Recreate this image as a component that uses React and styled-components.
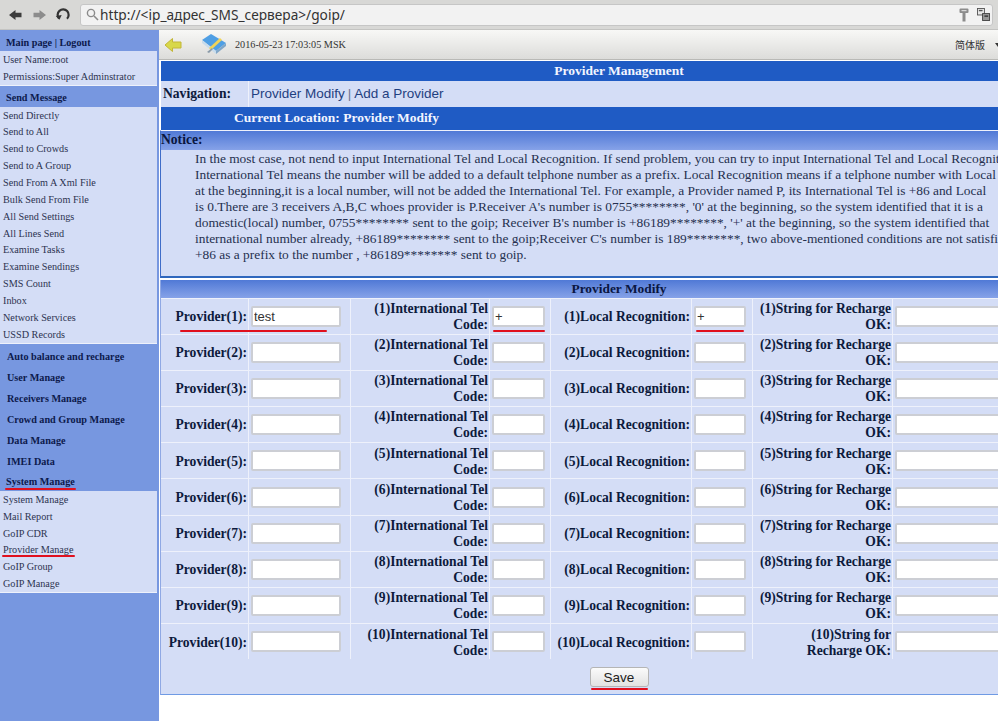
import React from 'react';
import styled, { createGlobalStyle } from 'styled-components';

const sideTop = [
  { title: 'Main page | Logout', items: ['User Name:root', 'Permissions:Super Adminstrator'] },
  {
    title: 'Send Message',
    items: [
      'Send Directly', 'Send to All', 'Send to Crowds', 'Send to A Group', 'Send From A Xml File',
      'Bulk Send From File', 'All Send Settings', 'All Lines Send', 'Examine Tasks', 'Examine Sendings',
      'SMS Count', 'Inbox', 'Network Services', 'USSD Records',
    ],
  },
];
const sideHeads = ['Auto balance and recharge', 'User Manage', 'Receivers Manage', 'Crowd and Group Manage', 'Data Manage', 'IMEI Data'];
const systemItems = ['System Manage', 'Mail Report', 'GoIP CDR', 'Provider Manage', 'GoIP Group', 'GoIP Manage'];

const noticeLines = [
  'In the most case, not nend to input International Tel and Local Recognition. If send problem, you can try to input International Tel and Local Recognition.',
  "International Tel means the number will be added to a default telphone number as a prefix. Local Recognition means if a telphone number with Local",
  'at the beginning,it is a local number, will not be added the International Tel. For example, a Provider named P, its International Tel is +86 and Local',
  "is 0.There are 3 receivers A,B,C whoes provider is P.Receiver A's number is 0755********, '0' at the beginning, so the system identified that it is a",
  "domestic(local) number, 0755******** sent to the goip; Receiver B's number is +86189********, '+' at the beginning, so the system identified that",
  "international number already, +86189******** sent to the goip;Receiver C's number is 189********, two above-mentioned conditions are not satisfied,",
  '+86 as a prefix to the number , +86189******** sent to goip.',
];

const rows = [1, 2, 3, 4, 5, 6, 7, 8, 9, 10];

const GlobalStyle = createGlobalStyle`
  html, body {
    margin: 0;
    padding: 0;
    background: #fff;
  }
  * {
    box-sizing: border-box;
  }
`;

const Page = styled.div`
  width: 998px;
  height: 721px;
  overflow: hidden;
  display: flex;
  flex-direction: column;
  font-family: 'Liberation Serif', serif;
`;

const BrowserBar = styled.div`
  flex: none;
  height: 30px;
  display: flex;
  align-items: center;
  gap: 7px;
  padding: 0 5px 0 8px;
  background: #d8d8d6;
  border-bottom: 1px solid #c4c4c2;
`;

const NavIcon = styled.svg`
  flex: none;
  width: 16px;
  height: 16px;
`;

const UrlBox = styled.div`
  flex: 1;
  height: 22px;
  margin-left: 2px;
  display: flex;
  align-items: center;
  gap: 1px;
  padding: 0 2px 0 5px;
  background: #f2f2f2;
  border: 1px solid #c6c6c6;
  border-radius: 3px;
`;

const UrlText = styled.span`
  flex: 1;
  font-family: 'Noto Sans', sans-serif;
  font-size: 13.7px;
  color: #333;
  white-space: nowrap;
`;

const Body = styled.div`
  flex: 1;
  display: flex;
  min-height: 0;
`;

const Sidebar = styled.div`
  flex: none;
  width: 159px;
  padding-top: 3px;
  background: #7797e0;
`;

const SideHead = styled.div`
  position: relative;
  height: ${p => p.$height || 21}px;
  padding-left: ${p => p.$indent || 6}px;
  display: flex;
  align-items: center;
  font-size: 10.2px;
  font-weight: bold;
  color: #0d1a4c;
  white-space: nowrap;
`;

const SidePanel = styled.div`
  width: 157px;
  margin-bottom: ${p => p.$gap || 0}px;
  padding: 0 0 0 3px;
  background: #d4ddf6;
  border-bottom: 1px solid #eef1fb;
`;

const SideItem = styled.div`
  position: relative;
  height: 16.85px;
  display: flex;
  align-items: center;
  font-size: 10.2px;
  color: #2c3350;
  white-space: nowrap;
`;

const RedMark = styled.i`
  position: absolute;
  z-index: 2;
  left: ${p => p.$left}px;
  bottom: ${p => p.$bottom}px;
  width: ${p => p.$width}px;
  height: 2px;
  background: #e0101e;
  border-radius: 1px;
`;

const Main = styled.div`
  flex: none;
  width: 839px;
  overflow: hidden;
`;

const Toolbar = styled.div`
  height: 30px;
  display: flex;
  align-items: center;
  padding-left: 5px;
  background: linear-gradient(#f8f8f6, #dcdcda);
  border-bottom: 1px solid #b9b9b6;
`;

const Stamp = styled.span`
  margin-left: 8px;
  font-size: 10.2px;
  color: #333;
  white-space: nowrap;
`;

const Lang = styled.span`
  margin-left: auto;
  margin-right: 10px;
  font-family: 'Noto Sans CJK SC', sans-serif;
  font-size: 10px;
  color: #333;
`;

const Caret = styled.span`
  flex: none;
  width: 6px;
  height: 0;
  margin-right: -3px;
  border-left: 3px solid transparent;
  border-right: 3px solid transparent;
  border-top: 4px solid #333;
`;

const Content = styled.div`
  width: 918px;
  padding-top: 1px;
  background: #fff;
`;

const BlueBar = styled.div`
  height: ${p => p.$height}px;
  margin-left: 2px;
  padding-left: ${p => p.$indent || 0}px;
  display: flex;
  align-items: center;
  justify-content: ${p => (p.$left ? 'flex-start' : 'center')};
  background: #1f5bc4;
  color: #f2f5ff;
  font-size: 13.5px;
  font-weight: bold;
  white-space: nowrap;
`;

const NavRow = styled.div`
  height: 26px;
  margin-left: 2px;
  display: grid;
  grid-template-columns: 87px 1fr;
  gap: 1px;
  background: #eef1fb;
`;

const NavLabel = styled.div`
  display: flex;
  align-items: center;
  padding-left: 2px;
  background: #d4ddf6;
  font-size: 13.6px;
  font-weight: bold;
  color: #0d1a3c;
`;

const NavValue = styled.div`
  display: flex;
  align-items: center;
  padding-left: 2px;
  background: #d4ddf6;
  font-family: 'Liberation Sans', sans-serif;
  font-size: 13.5px;
  color: #1f3f80;
`;

const NavSep = styled.span`
  margin: 0 3px;
  color: #6c7690;
`;

const GradientHead = styled.div`
  height: ${p => p.$height}px;
  padding-left: ${p => p.$indent || 0}px;
  display: flex;
  align-items: center;
  justify-content: ${p => (p.$center ? 'center' : 'flex-start')};
  background: linear-gradient(#5079d6, #86a2e8);
  font-size: ${p => p.$size}px;
  font-weight: bold;
  color: #0a1640;
`;

const NoticeBox = styled.div`
  margin-left: 1px;
  border-left: 1px solid #3f6cc8;
  border-top: 1px solid #eef1fb;
  border-bottom: 2px solid #2f67bd;
`;

const NoticeBody = styled.div`
  height: 126px;
  padding: 1px 0 0 34px;
  background: #d4ddf6;
  font-size: 13.4px;
  line-height: 16px;
  color: #25304f;
`;

const NoticeLine = styled.div`
  white-space: nowrap;
`;

const FormBox = styled.div`
  margin: 2px 0 0 1px;
  border-left: 1px solid #8fa8e4;
  border-bottom: 1px solid #6f9ae4;
`;

const FormGrid = styled.div`
  display: grid;
  grid-template-columns: 87px 101px 138px 60px 140px 60px 139px 1fr;
  grid-auto-rows: 35.2px;
  gap: 1px;
  padding-top: 1px;
  background: #eef1fb;
`;

const LabelCell = styled.div`
  position: relative;
  display: flex;
  align-items: center;
  justify-content: flex-end;
  padding: 1.5px 1px 0 4px;
  background: #d4ddf6;
  font-size: 13.6px;
  line-height: 16px;
  font-weight: bold;
  color: #0d1a3c;
  text-align: right;
`;

const InputCell = styled.div`
  position: relative;
  display: flex;
  align-items: center;
  padding-left: 2px;
  background: #d4ddf6;
`;

const TextBox = styled.input`
  width: ${p => p.$width}px;
  height: 21px;
  padding: 0 1px;
  background: #fff;
  border: 2px solid #ccced4;
  border-radius: 2px;
  font-family: 'Liberation Sans', sans-serif;
  font-size: 13px;
  color: #333;
  outline: none;
`;

const SaveRow = styled.div`
  position: relative;
  height: 35px;
  padding-top: 1px;
  display: flex;
  align-items: center;
  justify-content: center;
  background: #d4ddf6;
`;

const SaveButton = styled.button`
  width: 59px;
  height: 20px;
  padding: 0;
  background: linear-gradient(#fbfbfb, #e2e2e2);
  border: 1px solid #b5b5b5;
  border-radius: 3px;
  font-family: 'Liberation Sans', sans-serif;
  font-size: 13.5px;
  color: #222;
`;

const BackArrow = ({ flip, color }) => (
  <NavIcon viewBox="0 0 16 16" style={flip ? { transform: 'scaleX(-1)' } : undefined}>
    <path d="M1 8 L7.5 3 V5.8 H13.5 V10.2 H7.5 V13 Z" fill={color} />
  </NavIcon>
);

const Reload = () => (
  <NavIcon viewBox="0 0 16 16" style={{ marginLeft: 1 }}>
    <path d="M4 11.5 A5.5 5.5 0 1 1 12 11.8" fill="none" stroke="#333" strokeWidth="2.2" />
    <path d="M1 8.5 L7 8.5 L4 12.8 Z" fill="#333" transform="rotate(-10 4 10)" />
  </NavIcon>
);

const Search = () => (
  <svg width="13" height="13" viewBox="0 0 13 13">
    <circle cx="5" cy="5" r="3.6" fill="none" stroke="#8a8a8a" strokeWidth="1.4" />
    <path d="M8 8 L12 12" stroke="#8a8a8a" strokeWidth="1.6" />
  </svg>
);

const KeyIcon = () => (
  <svg width="10" height="14" viewBox="0 0 10 14" style={{ marginRight: 7 }}>
    <path d="M1.5 0.5 H8.5 Q9.5 0.5 9.5 1.5 V4 Q9.5 5 8.5 5 H6.5 V13.5 H3.5 V5 H1.5 Q0.5 5 0.5 4 V1.5 Q0.5 0.5 1.5 0.5 Z" fill="#8c8c8c" />
    <rect x="2.5" y="2" width="5" height="1.2" fill="#d8d8d8" />
  </svg>
);

const WindowsIcon = () => (
  <svg width="13" height="13" viewBox="0 0 14 14">
    <rect x="0.5" y="0.5" width="7.5" height="7" fill="#e8e8e8" stroke="#555" />
    <rect x="6" y="6" width="7.5" height="7.5" fill="#999" stroke="#444" />
    <rect x="2" y="2" width="4" height="1.5" fill="#555" />
    <rect x="8" y="8" width="4" height="1.5" fill="#333" />
  </svg>
);

const YellowArrow = () => (
  <svg width="18" height="16" viewBox="0 0 18 16">
    <path d="M1 8 L8.5 1.5 V5 H17 V11 H8.5 V14.5 Z" fill="#d8d84a" stroke="#c2b638" strokeWidth="1" />
  </svg>
);

const NoteIcon = () => (
  <svg width="26" height="24" viewBox="0 0 26 24" style={{ marginLeft: 19 }}>
    <path d="M1 7 L10 1 L25 10 L15 18 Z" fill="#4f9fe4" />
    <path d="M1 7 L15 18 L15 21 L1 10 Z" fill="#c8dcec" />
    <path d="M15 18 L25 10 V13 L15 21 Z" fill="#7fa6c8" />
    <path d="M8 15 L19 5 L21 7 L10 17 Z" fill="#f0d458" />
    <path d="M6 19 L11 15 L12 16 L8 20 Z" fill="#8a9aa8" />
  </svg>
);

export default function App() {
  return (
    <Page>
      <GlobalStyle />
      <BrowserBar>
        <BackArrow color="#3c3c3c" />
        <BackArrow flip color="#8c8c8c" />
        <Reload />
        <UrlBox>
          <Search />
          <UrlText>http://&lt;ip_адрес_SMS_сервера&gt;/goip/</UrlText>
          <KeyIcon />
          <WindowsIcon />
        </UrlBox>
      </BrowserBar>
      <Body>
        <Sidebar>
          {sideTop.map(group => (
            <React.Fragment key={group.title}>
              <SideHead $height={group.title === 'Send Message' ? 18.5 : 18}>{group.title}</SideHead>
              <SidePanel $gap={group.title === 'Send Message' ? 2.5 : 2.5}>
                {group.items.map(item => (
                  <SideItem key={item}>{item}</SideItem>
                ))}
              </SidePanel>
            </React.Fragment>
          ))}
          {sideHeads.map(head => (
            <SideHead key={head} $indent={7}>
              {head}
            </SideHead>
          ))}
          <SideHead $height={19}>
            System Manage
            <RedMark $left={5} $bottom={1} $width={71} />
          </SideHead>
          <SidePanel>
            {systemItems.map(item => (
              <SideItem key={item}>
                {item}
                {item === 'Provider Manage' && <RedMark $left={-1} $bottom={1} $width={73} />}
              </SideItem>
            ))}
          </SidePanel>
        </Sidebar>
        <Main>
          <Toolbar>
            <YellowArrow />
            <NoteIcon />
            <Stamp>2016-05-23 17:03:05 MSK</Stamp>
            <Lang>简体版</Lang>
            <Caret />
          </Toolbar>
          <Content>
            <BlueBar $height={19.5}>Provider Management</BlueBar>
            <NavRow>
              <NavLabel>Navigation:</NavLabel>
              <NavValue>
                Provider Modify<NavSep>|</NavSep>Add a Provider
              </NavValue>
            </NavRow>
            <BlueBar $height={23} $left $indent={73}>
              Current Location: Provider Modify
            </BlueBar>
            <NoticeBox>
              <GradientHead $height={19} $size={13.6}>
                Notice:
              </GradientHead>
              <NoticeBody>
                {noticeLines.map(line => (
                  <NoticeLine key={line}>{line}</NoticeLine>
                ))}
              </NoticeBody>
            </NoticeBox>
            <FormBox>
              <GradientHead $height={18} $size={13.4} $center>
                Provider Modify
              </GradientHead>
              <FormGrid>
                {rows.map(n => (
                  <React.Fragment key={n}>
                    <LabelCell>
                      {`Provider(${n}):`}
                      {n === 1 && <RedMark $left={19} $bottom={2} $width={147} />}
                    </LabelCell>
                    <InputCell>
                      <TextBox $width={90} defaultValue={n === 1 ? 'test' : ''} />
                    </InputCell>
                    <LabelCell>{`(${n})International Tel Code:`}</LabelCell>
                    <InputCell>
                      <TextBox $width={53} defaultValue={n === 1 ? '+' : ''} />
                      {n === 1 && <RedMark $left={3} $bottom={2} $width={52} />}
                    </InputCell>
                    <LabelCell>{`(${n})Local Recognition:`}</LabelCell>
                    <InputCell>
                      <TextBox $width={52} defaultValue={n === 1 ? '+' : ''} />
                      {n === 1 && <RedMark $left={4} $bottom={2} $width={48} />}
                    </InputCell>
                    <LabelCell>{`(${n})String for Recharge OK:`}</LabelCell>
                    <InputCell>
                      <TextBox $width={120} />
                    </InputCell>
                  </React.Fragment>
                ))}
              </FormGrid>
              <SaveRow>
                <SaveButton>Save</SaveButton>
                <RedMark $left={430} $bottom={4} $width={57} />
              </SaveRow>
            </FormBox>
          </Content>
        </Main>
      </Body>
    </Page>
  );
}
